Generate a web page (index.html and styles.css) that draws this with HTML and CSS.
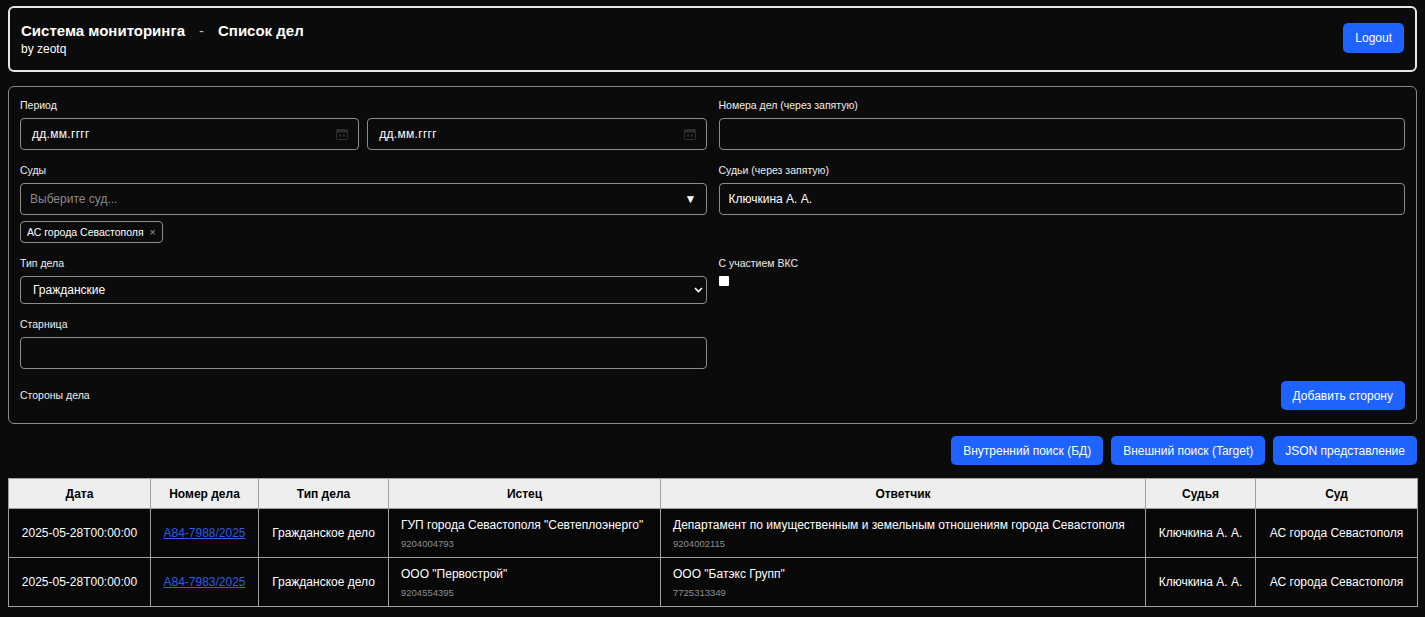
FILE: index.html
```html
<!DOCTYPE html>
<html lang="ru">
<head>
<meta charset="utf-8">
<title>Система мониторинга - Список дел</title>
<link rel="stylesheet" href="styles.css">
</head>
<body>
<div class="page">
  <header class="topbar">
    <div class="brand">
      <div class="title"><span>Система мониторинга</span><span class="dash">-</span><span>Список дел</span></div>
      <div class="author">by zeotq</div>
    </div>
    <button class="btn btn-logout">Logout</button>
  </header>

  <section class="filters">
    <div class="field">
      <div class="label">Период</div>
      <div class="pair">
        <div class="input date"><span>дд.мм.гггг</span>
          <svg class="cal" width="12" height="12" viewBox="0 0 12 12"><rect x="0.5" y="1.5" width="11" height="10" rx="1" fill="none" stroke="#2e2e2e"/><rect x="0.5" y="1.5" width="11" height="3" fill="#2e2e2e"/><rect x="3" y="6.5" width="2" height="2" fill="#2e2e2e"/><rect x="7" y="6.5" width="2" height="2" fill="#2e2e2e"/></svg>
        </div>
        <div class="input date"><span>дд.мм.гггг</span>
          <svg class="cal" width="12" height="12" viewBox="0 0 12 12"><rect x="0.5" y="1.5" width="11" height="10" rx="1" fill="none" stroke="#2e2e2e"/><rect x="0.5" y="1.5" width="11" height="3" fill="#2e2e2e"/><rect x="3" y="6.5" width="2" height="2" fill="#2e2e2e"/><rect x="7" y="6.5" width="2" height="2" fill="#2e2e2e"/></svg>
        </div>
      </div>
    </div>
    <div class="field">
      <div class="label">Номера дел (через запятую)</div>
      <input class="input" type="text">
    </div>

    <div class="field">
      <div class="label">Суды</div>
      <div class="input combo"><span class="placeholder">Выберите суд...</span><span class="tri">▼</span></div>
      <div class="chips"><span class="chip">АС города Севастополя <span class="x">×</span></span></div>
    </div>
    <div class="field">
      <div class="label">Судьи (через запятую)</div>
      <input class="input" type="text" value="Ключкина А. А.">
    </div>

    <div class="field">
      <div class="label">Тип дела</div>
      <div class="input select"><span>Гражданские</span>
        <svg width="9" height="6" viewBox="0 0 9 6"><path d="M1 1l3.5 3.5L8 1" fill="none" stroke="#fff" stroke-width="1.6"/></svg>
      </div>
    </div>
    <div class="field">
      <div class="label">С участием ВКС</div>
      <div class="checkbox"></div>
    </div>

    <div class="field">
      <div class="label">Старница</div>
      <input class="input" type="text">
    </div>
    <div class="field"></div>

    <div class="parties">
      <div class="label">Стороны дела</div>
      <button class="btn">Добавить сторону</button>
    </div>
  </section>

  <div class="actions">
    <button class="btn">Внутренний поиск (БД)</button>
    <button class="btn">Внешний поиск (Target)</button>
    <button class="btn">JSON представление</button>
  </div>

  <table class="cases">
    <colgroup>
      <col class="c-date"><col class="c-num"><col class="c-type"><col class="c-pl"><col class="c-def"><col class="c-judge"><col class="c-court">
    </colgroup>
    <thead>
      <tr><th>Дата</th><th>Номер дела</th><th>Тип дела</th><th>Истец</th><th>Ответчик</th><th>Судья</th><th>Суд</th></tr>
    </thead>
    <tbody>
      <tr>
        <td>2025-05-28T00:00:00</td>
        <td><a href="#">А84-7988/2025</a></td>
        <td>Гражданское дело</td>
        <td class="party"><div>ГУП города Севастополя "Севтеплоэнерго"</div><div class="inn">9204004793</div></td>
        <td class="party"><div>Департамент по имущественным и земельным отношениям города Севастополя</div><div class="inn">9204002115</div></td>
        <td>Ключкина А. А.</td>
        <td>АС города Севастополя</td>
      </tr>
      <tr>
        <td>2025-05-28T00:00:00</td>
        <td><a href="#">А84-7983/2025</a></td>
        <td>Гражданское дело</td>
        <td class="party"><div>ООО "Первострой"</div><div class="inn">9204554395</div></td>
        <td class="party"><div>ООО "Батэкс Групп"</div><div class="inn">7725313349</div></td>
        <td>Ключкина А. А.</td>
        <td>АС города Севастополя</td>
      </tr>
    </tbody>
  </table>
</div>
</body>
</html>
```

FILE: styles.css
```css
* { box-sizing: border-box; }
html, body { margin: 0; background: #0b0b0b; }
body {
  font-family: "Liberation Sans", Arial, sans-serif;
  color: #fff;
}
.page { padding: 6px 8px 0 8px; }

.topbar {
  height: 66px;
  border: 2px solid #e6e6e6;
  border-radius: 6px;
  display: flex;
  align-items: center;
  justify-content: space-between;
  padding: 0 11px;
}
.brand { margin-top: -1px; }
.title { font-size: 15px; font-weight: bold; line-height: 18px; }
.title .dash { font-weight: normal; color: #bbb; margin: 0 14px; }
.author { font-size: 12px; line-height: 14px; margin-top: 2px; }

.btn {
  font-family: inherit;
  font-size: 12px;
  color: #fff;
  background: #1e62ff;
  border: none;
  border-radius: 5px;
  height: 29px;
  padding: 0 12px;
}
.btn-logout { height: 30px; padding: 0 12px; margin-top: -2px; }

.filters {
  margin-top: 14px;
  border: 1px solid #8a8a8a;
  border-radius: 6px;
  padding: 12px 11px 13px 11px;
  display: grid;
  grid-template-columns: 1fr 1fr;
  column-gap: 12px;
  row-gap: 14px;
}
.label { font-size: 10.5px; line-height: 13px; color: #eee; margin-bottom: 6px; }
.input {
  display: flex;
  align-items: center;
  width: 100%;
  height: 32px;
  border: 1px solid #8c8c8c;
  border-radius: 4px;
  background: #0b0b0b;
  color: #fff;
  font-family: inherit;
  font-size: 12px;
  padding: 0 9px;
  outline: none;
}
.pair { display: flex; gap: 8px; }
.date { justify-content: space-between; font-size: 12px; letter-spacing: 0.3px; padding: 0 10px 0 11px; }
.cal { display: block; }
.combo { justify-content: space-between; padding: 0 9px; }
.placeholder { color: #8a8a8a; }
.tri { font-size: 12px; }
.chips { margin-top: 6px; display: flex; }
.chip {
  font-size: 10.5px;
  height: 22px;
  line-height: 20px;
  border: 1px solid #8c8c8c;
  border-radius: 4px;
  padding: 0 6px;
}
.chip .x { color: #999; margin-left: 3px; }
.select { height: 28px; justify-content: space-between; padding: 0 3px 0 12px; }
.checkbox { width: 10px; height: 10px; background: #fff; border-radius: 1px; margin-top: 6px; }

.parties {
  grid-column: 1 / 3;
  display: flex;
  justify-content: space-between;
  align-items: center;
  margin-top: -2px;
}
.parties .label { margin: 0; }

.actions {
  display: flex;
  justify-content: flex-end;
  gap: 8px;
  margin-top: 12px;
}

.cases {
  margin-top: 13px;
  width: 100%;
  border-collapse: collapse;
  table-layout: fixed;
  font-size: 12px;
}
.c-date { width: 142px; }
.c-num { width: 108px; }
.c-type { width: 130px; }
.c-pl { width: 272px; }
.c-def { width: 485px; }
.c-judge { width: 110px; }
.c-court { width: 162px; }
.cases th, .cases td { border: 1px solid #a0a0a0; }
.cases th {
  background: #eeeeee;
  color: #000;
  font-weight: bold;
  height: 30px;
  padding: 0 6px;
  line-height: 16px;
}
.cases td {
  background: #080808;
  color: #fff;
  text-align: center;
  height: 49px;
  padding: 0 6px;
  line-height: 16px;
}
.cases td.party { text-align: left; padding: 0 12px; }
.cases .inn { font-size: 9.5px; line-height: 13px; color: #8e8e8e; margin-top: 4px; }
.cases a { color: #2f5de6; text-decoration: underline; }
```
